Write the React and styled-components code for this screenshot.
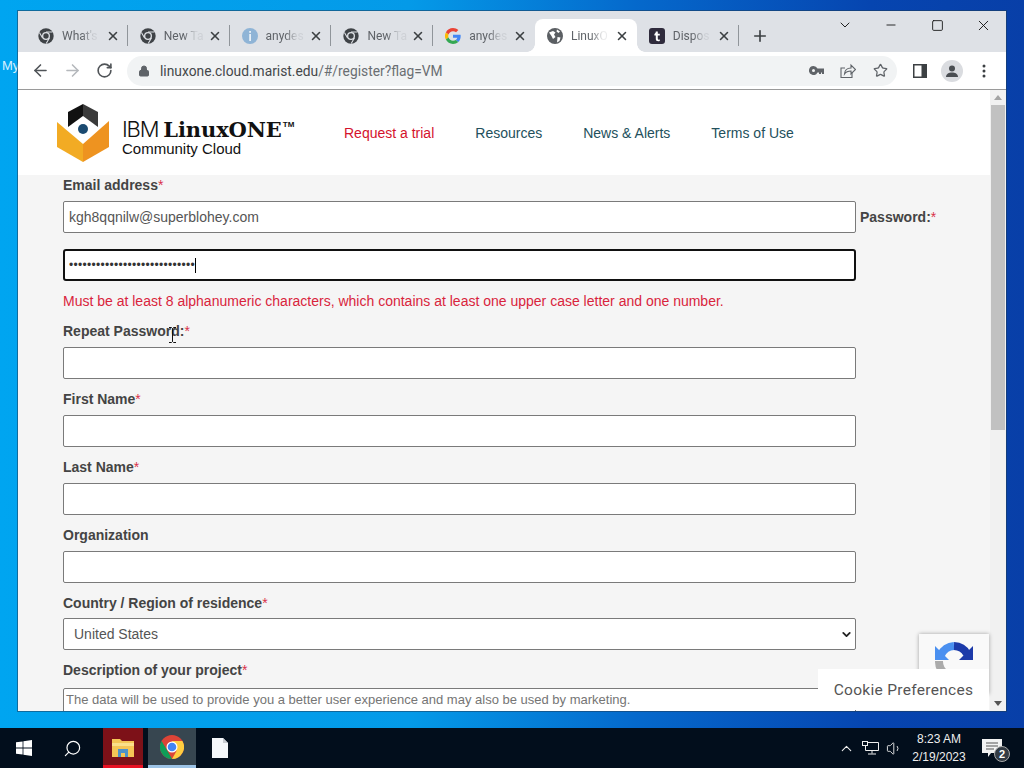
import React from "react";
import styled, { createGlobalStyle } from "styled-components";
import { ArrowLeft, ArrowRight, RotateCw, Lock, Star, X, Plus, ChevronDown, ChevronUp, Minus, Square, Search, Volume1 } from "lucide-react";

const Global = createGlobalStyle`
  html, body { margin: 0; padding: 0; width: 1024px; height: 768px; overflow: hidden; }
  body { font-family: "Liberation Sans", Arial, sans-serif; }
  * { box-sizing: border-box; }
`;

const Desktop = styled.div`
  position: relative;
  width: 1024px;
  height: 768px;
  overflow: hidden;
  background: linear-gradient(90deg, #00a5f0 0%, #049ae8 40%, #0569cc 62%, #0645b0 85%, #083fa8 100%);
`;
const DesktopLabel = styled.span`
  position: absolute;
  left: 2px;
  top: 58px;
  font-size: 13px;
  color: #d6f0ff;
`;
const Window = styled.div`
  position: absolute;
  left: 18px;
  top: 11px;
  width: 988px;
  height: 700px;
  display: flex;
  flex-direction: column;
  background: #fff;
  box-shadow: 0 0 0 1px rgba(30, 60, 90, 0.55);
`;
const TabStrip = styled.div`
  height: 41px;
  flex: none;
  display: flex;
  align-items: flex-end;
  padding-left: 8px;
  background: #dee1e6;
  position: relative;
`;
const Tab = styled.div`
  width: 101.8px;
  height: 33px;
  flex: none;
  display: flex;
  align-items: center;
  padding: 0 8px 0 12px;
  position: relative;
  border-radius: 8px 8px 0 0;
  background: ${p => (p.$active ? "#fff" : "transparent")};
  ${p => p.$sep && `
    &::after {
      content: "";
      position: absolute;
      right: 0;
      top: 6px;
      width: 1px;
      height: 21px;
      background: #90959a;
    }
  `}
  ${p => p.$active && `
    &::before, &::after {
      content: "";
      position: absolute;
      bottom: 0;
      width: 8px;
      height: 8px;
    }
    &::before {
      left: -8px;
      background: radial-gradient(circle at 0 0, transparent 7.5px, #fff 8px);
    }
    &::after {
      right: -8px;
      background: radial-gradient(circle at 100% 0, transparent 7.5px, #fff 8px);
    }
  `}
`;
const TabIcon = styled.span`
  width: 16px;
  height: 16px;
  flex: none;
  display: flex;
`;
const TabTitle = styled.span`
  flex: 1;
  margin-left: 8px;
  font: 12px "Roboto", "Liberation Sans", sans-serif;
  color: #5f6368;
  white-space: nowrap;
  -webkit-mask-image: linear-gradient(90deg, #000 45%, rgba(0, 0, 0, 0.12) 72%);
  mask-image: linear-gradient(90deg, #000 45%, rgba(0, 0, 0, 0.12) 72%);
`;
const TabClose = styled(X)`
  flex: none;
  color: #3c4043;
`;
const NewTab = styled(Plus)`
  margin: 0 0 7px 12px;
  color: #3c4043;
`;
const WindowControls = styled.div`
  position: absolute;
  right: 0;
  top: 0;
  display: flex;
  align-items: center;
  height: 28px;
  color: #111;
`;
const WinBtn = styled.span`
  width: 46px;
  display: flex;
  justify-content: center;
`;
const Toolbar = styled.div`
  height: 38px;
  flex: none;
  display: flex;
  align-items: center;
  padding-left: 6px;
  background: #fff;
  border-bottom: 1px solid #9a9a9a;
`;
const NavBtn = styled.span`
  width: 32px;
  display: flex;
  justify-content: center;
  color: ${p => (p.$off ? "#b5b8bc" : "#505458")};
`;
const Omnibox = styled.div`
  margin-left: 7px;
  flex: none;
  width: 770px;
  height: 30px;
  display: flex;
  align-items: center;
  padding: 0 1px 0 11px;
  border-radius: 15px;
  background: #f1f3f4;
`;
const Url = styled.span`
  flex: 1;
  margin-left: 10px;
  font: 13.8px "Roboto", "Liberation Sans", sans-serif;
  color: #44474a;
`;
const UrlMuted = styled.span`
  color: #6a6e72;
`;
const OmniIcon = styled.span`
  width: 32px;
  display: flex;
  justify-content: center;
  color: #5f6368;
`;
const ToolbarRight = styled.div`
  display: flex;
  align-items: center;
  margin-left: 7px;
`;
const ToolBtn = styled.span`
  width: 32px;
  display: flex;
  justify-content: center;
  align-items: center;
  color: #3c4043;
`;
const Avatar = styled.span`
  width: 22px;
  height: 22px;
  border-radius: 50%;
  background: #dadce0;
  display: flex;
  align-items: center;
  justify-content: center;
`;
const Viewport = styled.div`
  flex: 1;
  min-height: 0;
  display: flex;
  position: relative;
  overflow: hidden;
`;
const Page = styled.div`
  flex: 1;
  min-width: 0;
  overflow: hidden;
  background: #f5f5f5;
`;
const Header = styled.header`
  height: 85px;
  display: flex;
  align-items: center;
  padding-left: 39px;
  background: #fff;
`;
const Logo = styled.div`
  width: 287px;
  display: flex;
  align-items: center;
  flex: none;
`;
const LogoText = styled.div`
  margin: 7px 0 0 13px;
  color: #111;
  display: flex;
  flex-direction: column;
  line-height: 1;
`;
const LogoTop = styled.div`
  display: flex;
  align-items: baseline;
  height: 24px;
  white-space: nowrap;
`;
const LogoIbm = styled.span`
  font: 300 22px "Inter", "Liberation Sans", sans-serif;
  letter-spacing: -1.2px;
`;
const LogoLinux = styled.span`
  font: 700 21px "DejaVu Serif", "Liberation Serif", serif;
  margin-left: 5px;
  letter-spacing: -0.1px;
`;
const LogoTm = styled.span`
  font: 700 8px "Liberation Sans", sans-serif;
  align-self: flex-start;
  margin: 4px 0 0 1px;
`;
const LogoSub = styled.span`
  font: 15px "Liberation Sans", sans-serif;
`;
const Nav = styled.nav`
  display: flex;
  gap: 41px;
  font-size: 14px;
`;
const NavLink = styled.a`
  color: ${p => (p.$red ? "#d4122c" : "#23505c")};
`;
const Form = styled.div`
  padding-left: 45px;
  width: 838px;
  margin-top: 2px;
  display: flex;
  flex-direction: column;
`;
const Label = styled.label`
  display: block;
  font-size: 14px;
  font-weight: 700;
  line-height: 16px;
  color: #444;
  margin-top: ${p => p.$mt ?? 12}px;
  margin-bottom: ${p => p.$mb ?? 8}px;
  white-space: nowrap;
`;
const Req = styled.span`
  font-weight: 400;
  color: #d9304a;
`;
const Row = styled.div`
  display: flex;
  align-items: center;
`;
const TextInput = styled.div`
  width: 793px;
  height: 32px;
  flex: none;
  display: flex;
  align-items: center;
  padding: 0 5px;
  font-size: 14px;
  color: #555;
  background: #fff;
  border: 1px solid #7a7a7a;
  border-radius: 2px;
`;
const PasswordInput = styled(TextInput)`
  border: 2px solid #111;
  border-radius: 3px;
  margin-top: 16px;
  padding: 0 4px;
  color: #333;
  font-size: 12px;
  letter-spacing: 0.3px;
`;
const Caret = styled.span`
  width: 1px;
  height: 15px;
  background: #000;
`;
const InlineLabel = styled(Label)`
  margin: 0 0 0 4px;
`;
const ErrorText = styled.p`
  margin: 12px 0 0;
  font-size: 14px;
  line-height: 16px;
  color: #d9243c;
  white-space: nowrap;
`;
const SelectBox = styled(TextInput)`
  justify-content: space-between;
  padding: 0 2px 0 10px;
`;
const Textarea = styled(TextInput)`
  height: 48px;
  align-items: flex-start;
  padding: 3px 2px;
  font-size: 13px;
  color: #757575;
`;
const Scrollbar = styled.div`
  width: 16px;
  flex: none;
  display: flex;
  flex-direction: column;
  align-items: center;
  background: #f1f1f1;
`;
const ScrollArrow = styled.span`
  width: 0;
  height: 0;
  border-left: 4px solid transparent;
  border-right: 4px solid transparent;
  ${p => (p.$down ? "border-top: 5px solid #555;" : "border-bottom: 5px solid #a3a3a3;")}
  margin: 5px 0;
  flex: none;
`;
const Thumb = styled.div`
  width: 14px;
  height: 325px;
  flex: none;
  background: #c1c1c1;
`;
const ScrollSpacer = styled.div`
  flex: 1;
`;
const Recaptcha = styled.div`
  position: absolute;
  left: 901px;
  top: 544px;
  width: 70px;
  height: 60px;
  display: flex;
  justify-content: center;
  padding-top: 8px;
  background: #f9f9f9;
  box-shadow: 0 0 4px rgba(0, 0, 0, 0.35);
`;
const Cookie = styled.div`
  position: absolute;
  left: 800px;
  top: 579px;
  width: 171px;
  height: 41px;
  display: flex;
  align-items: center;
  justify-content: center;
  background: #fff;
  font: 15.5px "Roboto", "Liberation Sans", sans-serif;
  letter-spacing: 0.3px;
  color: #555;
`;
const PointerCursor = styled.svg`
  position: absolute;
  left: 150px;
  top: 237px;
`;
const Taskbar = styled.div`
  position: absolute;
  left: 0;
  right: 0;
  bottom: 0;
  height: 40px;
  display: flex;
  align-items: stretch;
  background: #020e1c;
`;
const TaskIcon = styled.div`
  width: ${p => p.$w || 48}px;
  margin-left: ${p => p.$ml || 0}px;
  flex: none;
  display: flex;
  align-items: center;
  justify-content: center;
  background: ${p => p.$bg || "transparent"};
  border-bottom: ${p => (p.$line ? `3px solid ${p.$line}` : "none")};
  color: #fff;
`;
const MirroredSearch = styled(Search)`
  transform: scaleX(-1);
`;
const Tray = styled.div`
  margin-left: auto;
  display: flex;
  align-items: center;
  color: #eee;
`;
const TrayIcon = styled.span`
  width: 24px;
  display: flex;
  justify-content: center;
`;
const Clock = styled.div`
  width: 60px;
  margin-left: 3px;
  text-align: center;
  font: 12px/18px "Liberation Sans", sans-serif;
  color: #eee;
  white-space: nowrap;
`;
const Notify = styled.div`
  width: 44px;
  height: 100%;
  display: flex;
  align-items: center;
  justify-content: center;
  position: relative;
  margin-left: 1px;
  margin-right: 10px;
`;
const Badge = styled.span`
  position: absolute;
  left: 24px;
  top: 18px;
  width: 16px;
  height: 16px;
  border-radius: 50%;
  background: #333b44;
  border: 1px solid #aaa;
  display: flex;
  align-items: center;
  justify-content: center;
  font-size: 11px;
  font-weight: 700;
  color: #fff;
`;

const ChromeMono = ({ c = "#3f4347" }) => (
  <svg width="16" height="16" viewBox="0 0 16 16">
    <circle cx="8" cy="8" r="7.700" fill={c} />
    <circle cx="8" cy="8" r="4" fill="#dee1e6" />
    <circle cx="8" cy="8" r="2.700" fill={c} />
    <path d="M8 4h6.400M4.600 10 1.400 4.500M11.400 10l-3.200 5.500" stroke="#dee1e6" strokeWidth="1.100" />
  </svg>
);
const InfoIcon = () => (
  <svg width="16" height="16" viewBox="0 0 16 16">
    <circle cx="8" cy="8" r="8" fill="#8fb4d6" />
    <rect x="7.200" y="3" width="1.800" height="1.800" fill="#e8f0f7" />
    <rect x="7.200" y="6" width="1.800" height="7" fill="#e8f0f7" />
  </svg>
);
const GoogleIcon = () => (
  <svg width="16" height="16" viewBox="0 0 48 48">
    <path fill="#EA4335" d="M24 9.500c3.500 0 6.700 1.200 9.200 3.600l6.900-6.900C35.900 2.400 30.500 0 24 0 14.600 0 6.500 5.400 2.600 13.200l8 6.200C12.500 13.700 17.800 9.500 24 9.500z" />
    <path fill="#4285F4" d="M47 24.500c0-1.600-.1-3.100-.4-4.500H24v9h12.900c-.6 3-2.200 5.500-4.800 7.200l7.700 6c4.500-4.200 7.200-10.300 7.200-17.700z" />
    <path fill="#FBBC05" d="M10.500 28.600a14.500 14.500 0 0 1 0-9.200l-8-6.200a24 24 0 0 0 0 21.600l8-6.200z" />
    <path fill="#34A853" d="M24 48c6.500 0 11.900-2.100 15.900-5.800l-7.700-6c-2.200 1.400-4.900 2.300-8.200 2.300-6.200 0-11.500-4.200-13.400-9.900l-8 6.200C6.500 42.600 14.600 48 24 48z" />
  </svg>
);
const GlobeIcon = () => (
  <svg width="16" height="16" viewBox="0 0 16 16">
    <circle cx="8" cy="8" r="8" fill="#5b5f63" />
    <path d="M2 4.500 6 3l2.500 1.500L7 6.500 8.500 9 6 11 4.500 8zM10.500 9l3 .5-1 3.500-2.500 1.500z M10 1.500l3 2-1.500 1.500-2-1.500z" fill="#fff" />
  </svg>
);
const TIcon = () => (
  <svg width="16" height="16" viewBox="0 0 16 16">
    <rect width="16" height="16" rx="3" fill="#2f2b3c" />
    <path d="M6.800 3.500h2v2.200h2v1.700h-2v3.400c0 .8.8 1 2 .7v1.600c-2.400.6-4-.1-4-2V7.400H5.400V6c.9-.4 1.300-1.200 1.400-2.500z" fill="#fff" />
  </svg>
);
const LogoMark = () => (
  <svg width="52" height="58" viewBox="0 0 52 58">
    <path d="M26 0 11 8v15L26 12z" fill="#111" />
    <path d="M26 0 41 8v15L26 12z" fill="#3a3a3a" />
    <path d="M0 18 26 40v18L0 43z" fill="#f2ab24" />
    <path d="M52 17 26 40v18l26-15z" fill="#ee9320" />
    <circle cx="26" cy="25" r="5" fill="#1b4a70" />
  </svg>
);
const ChromeColor = () => (
  <svg width="24" height="24" viewBox="0 0 48 48">
    <circle cx="24" cy="24" r="24" fill="#db4437" />
    <path d="M24 48A24 24 0 0 1 3.200 12L15 32z" fill="#0f9d58" />
    <path d="M24 48a24 24 0 0 0 20.800-36H24l9 20z" fill="#ffcd40" />
    <circle cx="24" cy="24" r="11" fill="#fff" />
    <circle cx="24" cy="24" r="8.600" fill="#4285f4" />
  </svg>
);
const FolderIcon = () => (
  <svg width="22" height="20" viewBox="0 0 22 20">
    <path d="M0 2h8l2 2h12v16H0z" fill="#f5c656" />
    <path d="M0 6h22v3H0z" fill="#fbe08a" />
    <path d="M6 12h10v8h-3v-4H9v4H6z" fill="#4d92c9" />
  </svg>
);
const WinLogo = () => (
  <svg width="16" height="16" viewBox="0 0 16 16" fill="#fff">
    <path d="M0 2.300 6.600 1.400v6.200H0zM7.400 1.300 16 0v7.600H7.400zM0 8.400h6.600v6.200L0 13.700zM7.400 8.400H16V16l-8.600-1.300z" />
  </svg>
);
const FileIcon = () => (
  <svg width="16" height="20" viewBox="0 0 16 20">
    <path d="M0 0h11l5 5v15H0z" fill="#f4f7fb" />
    <path d="M11 0v5h5z" fill="#c8ccd2" />
  </svg>
);
const NetIcon = () => (
  <svg width="17" height="14" viewBox="0 0 17 14" fill="none" stroke="#eee">
    <path d="M3.500 1.500h13v8h-13zM10 9.500v3M6 13h8" />
    <rect x="0.500" y="0.500" width="5" height="4" fill="#020e1c" />
  </svg>
);
const ReIcon = () => (
  <svg width="38" height="38" viewBox="0 0 38 38" fill="none">
    <path d="M6 13A15 15 0 0 1 19 4" stroke="#4a90f0" strokeWidth="8" />
    <path d="M19 4a15 15 0 0 1 13 8" stroke="#1c3aa9" strokeWidth="8" />
    <path d="M38 4v14H24z" fill="#1c3aa9" />
    <path d="M0 4v14h14z" fill="#4a90f0" />
    <path d="M4 19a15 15 0 0 0 7 13" stroke="#ababab" strokeWidth="8" />
  </svg>
);
const KeyIcon = () => (
  <svg width="15" height="9" viewBox="0 0 15 9" fill="#5f6368">
    <path d="M4.500 0a4.500 4.500 0 1 0 4 6.500H10V8h2V6.500h1V8h2V2.500H8.500A4.500 4.500 0 0 0 4.500 0zm0 3a1.500 1.500 0 1 1 0 3 1.500 1.500 0 0 1 0-3z" fillRule="evenodd" />
  </svg>
);
const ShareIcon = () => (
  <svg width="16" height="15" viewBox="0 0 16 15" fill="none" stroke="#5f6368" strokeWidth="1.100">
    <path d="M5 5H1v9.500h11V10" />
    <path d="M4.500 11c.3-4 3-6 6.500-6V2l4.500 4.500L11 11V8c-2.800 0-5 .8-6.500 3z" />
  </svg>
);

const tabs = [
  { icon: <ChromeMono />, title: "What's", sep: true },
  { icon: <ChromeMono />, title: "New Ta", sep: true },
  { icon: <InfoIcon />, title: "anydes", sep: true },
  { icon: <ChromeMono />, title: "New Ta", sep: true },
  { icon: <GoogleIcon />, title: "anydes" },
  { icon: <GlobeIcon />, title: "LinuxO", active: true },
  { icon: <TIcon />, title: "Dispos", sep: true },
];

const R = () => <Req>*</Req>;

export default function App() {
  return (
    <Desktop>
      <Global />
      <DesktopLabel>My</DesktopLabel>
      <Window>
        <TabStrip>
          {tabs.map((t, i) => (
            <Tab key={i} $active={t.active} $sep={t.sep}>
              <TabIcon>{t.icon}</TabIcon>
              <TabTitle>{t.title}</TabTitle>
              <TabClose size={14} strokeWidth={2.6} />
            </Tab>
          ))}
          <NewTab size={18} strokeWidth={2.2} />
          <WindowControls>
            <WinBtn><ChevronDown size={16} strokeWidth={1.4} /></WinBtn>
            <WinBtn><Minus size={14} strokeWidth={1.5} /></WinBtn>
            <WinBtn><Square size={13} strokeWidth={1.6} /></WinBtn>
            <WinBtn><X size={17} strokeWidth={1.3} /></WinBtn>
          </WindowControls>
        </TabStrip>
        <Toolbar>
          <NavBtn><ArrowLeft size={19} strokeWidth={2} /></NavBtn>
          <NavBtn $off><ArrowRight size={19} strokeWidth={2} /></NavBtn>
          <NavBtn><RotateCw size={17} strokeWidth={2.3} /></NavBtn>
          <Omnibox>
            <Lock size={12} fill="#5f6368" color="#5f6368" />
            <Url>linuxone.cloud.marist.edu<UrlMuted>/#/register?flag=VM</UrlMuted></Url>
            <OmniIcon><KeyIcon /></OmniIcon>
            <OmniIcon><ShareIcon /></OmniIcon>
            <OmniIcon><Star size={15} strokeWidth={2} /></OmniIcon>
          </Omnibox>
          <ToolbarRight>
            <ToolBtn>
              <svg width="14" height="14" viewBox="0 0 14 14"><path d="M0 0h14v14H0z" fill="#3c4043" /><path d="M1.500 1.500h7v11h-7z" fill="#fff" /></svg>
            </ToolBtn>
            <ToolBtn>
              <Avatar>
                <svg width="14" height="14" viewBox="0 0 14 14" fill="#4a4e52"><circle cx="7" cy="4.500" r="3" /><path d="M1 13c0-3.200 3-4.500 6-4.500s6 1.300 6 4.500z" /></svg>
              </Avatar>
            </ToolBtn>
            <ToolBtn>
              <svg width="4" height="14" viewBox="0 0 4 14" fill="#3c4043"><circle cx="2" cy="2" r="1.500" /><circle cx="2" cy="7" r="1.500" /><circle cx="2" cy="12" r="1.500" /></svg>
            </ToolBtn>
          </ToolbarRight>
        </Toolbar>
        <Viewport>
          <Page>
            <Header>
              <Logo>
                <LogoMark />
                <LogoText>
                  <LogoTop>
                    <LogoIbm>IBM</LogoIbm>
                    <LogoLinux>LinuxONE</LogoLinux>
                    <LogoTm>TM</LogoTm>
                  </LogoTop>
                  <LogoSub>Community Cloud</LogoSub>
                </LogoText>
              </Logo>
              <Nav>
                <NavLink $red>Request a trial</NavLink>
                <NavLink>Resources</NavLink>
                <NavLink>News &amp; Alerts</NavLink>
                <NavLink>Terms of Use</NavLink>
              </Nav>
            </Header>
            <Form>
              <Label $mt={0}>Email address<R /></Label>
              <Row>
                <TextInput>kgh8qqnilw@superblohey.com</TextInput>
                <InlineLabel>Password:<R /></InlineLabel>
              </Row>
              <PasswordInput>••••••••••••••••••••••••••••<Caret /></PasswordInput>
              <ErrorText>Must be at least 8 alphanumeric characters, which contains at least one upper case letter and one number.</ErrorText>
              <Label $mt={14}>Repeat Password:<R /></Label>
              <TextInput />
              <Label>First Name<R /></Label>
              <TextInput />
              <Label>Last Name<R /></Label>
              <TextInput />
              <Label>Organization</Label>
              <TextInput />
              <Label $mb={7}>Country / Region of residence<R /></Label>
              <SelectBox>
                United States
                <ChevronDown size={13} strokeWidth={3.4} color="#222" />
              </SelectBox>
              <Label $mb={10}>Description of your project<R /></Label>
              <Textarea>The data will be used to provide you a better user experience and may also be used by marketing.</Textarea>
            </Form>
          </Page>
          <Scrollbar>
            <ScrollArrow />
            <Thumb />
            <ScrollSpacer />
            <ScrollArrow $down />
          </Scrollbar>
          <PointerCursor width="9" height="16" viewBox="0 0 9 16" fill="none" stroke="#111">
            <path d="M1 .5h2.500L4.500 1.500 5.500.5H8M4.500 1.500v13M1 15.500h2.500l1-1 1 1H8" />
          </PointerCursor>
          <Recaptcha><ReIcon /></Recaptcha>
          <Cookie>Cookie Preferences</Cookie>
        </Viewport>
      </Window>
      <Taskbar>
        <TaskIcon><WinLogo /></TaskIcon>
        <TaskIcon><MirroredSearch size={19} strokeWidth={1.5} /></TaskIcon>
        <TaskIcon $w={40} $ml={7} $bg="#7d1118" $line="#e81123"><FolderIcon /></TaskIcon>
        <TaskIcon $ml={5} $bg="#374650" $line="#9cc3e6"><ChromeColor /></TaskIcon>
        <TaskIcon><FileIcon /></TaskIcon>
        <Tray>
          <TrayIcon><ChevronUp size={17} strokeWidth={1.5} /></TrayIcon>
          <TrayIcon><NetIcon /></TrayIcon>
          <TrayIcon><Volume1 size={17} strokeWidth={1.3} /></TrayIcon>
          <Clock>8:23 AM<br />2/19/2023</Clock>
          <Notify>
            <svg width="20" height="18" viewBox="0 0 20 18" fill="#f2f2f2"><path d="M0 0h20v14H9l-3 4v-4H0z" /><path d="M4 4h12M4 7h12M4 10h8" stroke="#555" /></svg>
            <Badge>2</Badge>
          </Notify>
        </Tray>
      </Taskbar>
    </Desktop>
  );
}
